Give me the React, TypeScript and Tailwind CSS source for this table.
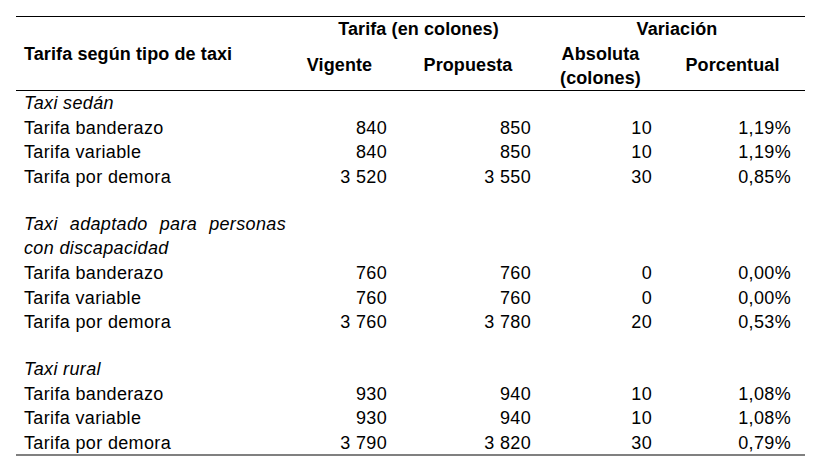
import React from "react";

type Row =
  | { kind: "group"; label: string; justify?: boolean }
  | { kind: "blank" }
  | { kind: "data"; label: string; v: string; p: string; a: string; pc: string };

const rows: Row[] = [
  { kind: "group", label: "Taxi sedán" },
  { kind: "data", label: "Tarifa banderazo", v: "840", p: "850", a: "10", pc: "1,19%" },
  { kind: "data", label: "Tarifa variable", v: "840", p: "850", a: "10", pc: "1,19%" },
  { kind: "data", label: "Tarifa por demora", v: "3 520", p: "3 550", a: "30", pc: "0,85%" },
  { kind: "blank" },
  { kind: "group", label: "Taxi adaptado para personas", justify: true },
  { kind: "group", label: "con discapacidad" },
  { kind: "data", label: "Tarifa banderazo", v: "760", p: "760", a: "0", pc: "0,00%" },
  { kind: "data", label: "Tarifa variable", v: "760", p: "760", a: "0", pc: "0,00%" },
  { kind: "data", label: "Tarifa por demora", v: "3 760", p: "3 780", a: "20", pc: "0,53%" },
  { kind: "blank" },
  { kind: "group", label: "Taxi rural" },
  { kind: "data", label: "Tarifa banderazo", v: "930", p: "940", a: "10", pc: "1,08%" },
  { kind: "data", label: "Tarifa variable", v: "930", p: "940", a: "10", pc: "1,08%" },
  { kind: "data", label: "Tarifa por demora", v: "3 790", p: "3 820", a: "30", pc: "0,79%" },
];

export default function App() {
  return (
    <div className="w-[822px] h-[476px] bg-white pt-[16px] pl-[16px] text-black font-['Liberation_Sans',Arial,sans-serif] text-[18px] tracking-[0.35px]">
      <div className="w-[789px] border-t border-black border-b-2 border-b-[#808080]">
        {/* Header */}
        <div className="grid grid-cols-[270px_111px_144px_121px_143px] grid-rows-[24px_49px] border-b border-black font-bold tracking-[0.1px]">
          <div className="row-span-2 flex items-center pl-[8px] pt-[2px]">Tarifa según tipo de taxi</div>
          <div className="col-span-2 flex items-center justify-center pl-[10px]">Tarifa (en colones)</div>
          <div className="col-span-2 flex items-center justify-center pl-[8px]">Variación</div>
          <div className="flex items-center justify-center pr-[4px]">Vigente</div>
          <div className="flex items-center justify-center pr-[2px]">Propuesta</div>
          <div className="flex flex-col items-center justify-center leading-[24px] pr-[2px]">
            <span>Absoluta</span>
            <span>(colones)</span>
          </div>
          <div className="flex items-center justify-center pr-[2px]">Porcentual</div>
        </div>
        {/* Body */}
        <div className="flex flex-col">
          {rows.map((r, i) => {
            if (r.kind === "blank") return <div key={i} className="h-[24.2px]" />;
            if (r.kind === "group")
              return (
                <div key={i} className="h-[24.2px] flex items-center pl-[8px]">
                  <span
                    className={
                      r.justify
                        ? "italic w-[262px] text-justify [text-align-last:justify]"
                        : "italic"
                    }
                  >
                    {r.label}
                  </span>
                </div>
              );
            return (
              <div
                key={i}
                className="h-[24.2px] grid grid-cols-[270px_111px_144px_121px_143px] items-center"
              >
                <div className="pl-[8px]">{r.label}</div>
                <div className="text-right pr-[10px]">{r.v}</div>
                <div className="text-right pr-[10px]">{r.p}</div>
                <div className="text-right pr-[10px]">{r.a}</div>
                <div className="text-right pr-[14px]">{r.pc}</div>
              </div>
            );
          })}
        </div>
      </div>
    </div>
  );
}
